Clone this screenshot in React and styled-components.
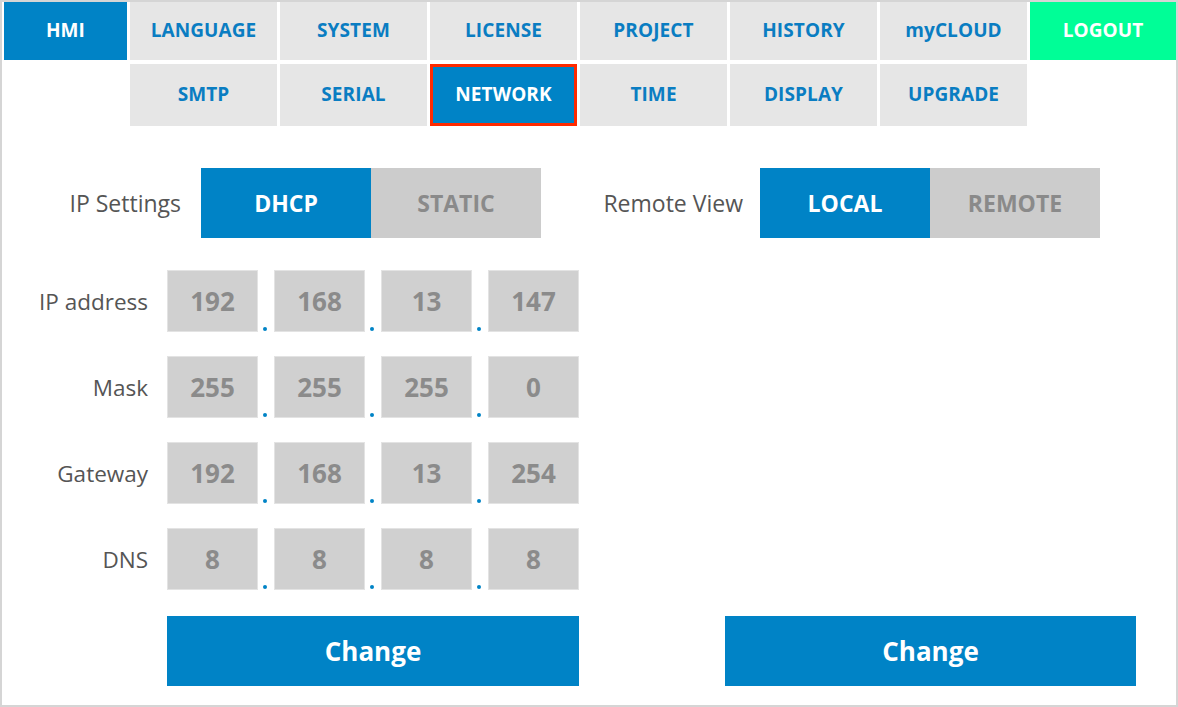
import React from "react";
import styled, { createGlobalStyle } from "styled-components";

const Global = createGlobalStyle`
  html, body { margin: 0; padding: 0; background: #fff; }
  body { font-family: "Open Sans", "Noto Sans", sans-serif; }
  * { box-sizing: border-box; }
`;

const Frame = styled.div`
  width: 1178px;
  height: 707px;
  border: 2px solid #d5d5d5;
  background: #fff;
  display: flex;
  flex-direction: column;
  overflow: hidden;
`;

const Nav = styled.nav`
  display: grid;
  grid-template-columns: 123px repeat(6, 147px) 146px;
  grid-template-rows: 58px 62px;
  column-gap: 3px;
  row-gap: 4px;
  padding-left: 2px;
`;

const NavItem = styled.div`
  grid-column: ${(p) => p.$col || "auto"};
  display: flex;
  align-items: center;
  justify-content: center;
  padding-bottom: 2px;
  background: ${(p) =>
    p.$variant === "active" || p.$variant === "current"
      ? "#0083c6"
      : p.$variant === "logout"
      ? "#00fe97"
      : "#e6e6e6"};
  color: ${(p) => (p.$variant ? "#ffffff" : "#0a7dc2")};
  border: ${(p) => (p.$variant === "current" ? "3px solid #ff2a00" : "none")};
  font-weight: 700;
  font-size: 19px;
  letter-spacing: 0.1px;
`;

const Body = styled.div`
  display: grid;
  grid-template-columns: 595px 1fr;
  grid-template-rows: 70px auto 70px;
  margin-top: 42px;
`;

const SettingRow = styled.div`
  display: flex;
  align-items: center;
  gap: ${(p) => p.$gap}px;
`;

const SettingLabel = styled.div`
  width: ${(p) => p.$w}px;
  text-align: right;
  font-size: 23px;
  color: #555555;
  white-space: nowrap;
`;

const Toggle = styled.div`
  display: flex;
  height: 70px;
`;

const ToggleBtn = styled.div`
  width: 170px;
  height: 70px;
  display: flex;
  align-items: center;
  justify-content: center;
  font-weight: 700;
  font-size: 23px;
  background: ${(p) => (p.$on ? "#0083c6" : "#cccccc")};
  color: ${(p) => (p.$on ? "#ffffff" : "#8a8a8a")};
`;

const Fields = styled.div`
  display: flex;
  flex-direction: column;
  gap: 24px;
  margin-top: 32px;
`;

const FieldRow = styled.div`
  display: flex;
  align-items: center;
`;

const FieldLabel = styled.div`
  width: 146px;
  margin-right: 19px;
  text-align: right;
  font-size: 22.5px;
  color: #555555;
  white-space: nowrap;
`;

const Octet = styled.div`
  width: 91px;
  height: 62px;
  background: #d0d0d0;
  border: 1px solid #e3e3e3;
  display: flex;
  align-items: center;
  justify-content: center;
  font-weight: 700;
  font-size: 26px;
  color: #8b8b8b;
`;

const DotGap = styled.div`
  width: 16px;
  height: 62px;
  display: flex;
  align-items: flex-end;
  justify-content: center;
  padding-bottom: 1px;
  padding-right: 2px;
`;

const Dot = styled.span`
  width: 4px;
  height: 4px;
  border-radius: 50%;
  background: #0083c6;
`;

const ChangeRow = styled.div`
  display: flex;
  align-items: flex-start;
  padding-left: ${(p) => p.$pad}px;
  margin-top: 26px;
`;

const ChangeBtn = styled.button`
  width: ${(p) => p.$w}px;
  height: 70px;
  border: none;
  background: #0083c6;
  color: #ffffff;
  font-family: "Open Sans", "Noto Sans", sans-serif;
  font-weight: 700;
  font-size: 26px;
  padding: 0;
`;

const topRow = ["LANGUAGE", "SYSTEM", "LICENSE", "PROJECT", "HISTORY", "myCLOUD"];
const bottomRow = ["SMTP", "SERIAL", "NETWORK", "TIME", "DISPLAY", "UPGRADE"];

const fields = [
  ["IP address", ["192", "168", "13", "147"]],
  ["Mask", ["255", "255", "255", "0"]],
  ["Gateway", ["192", "168", "13", "254"]],
  ["DNS", ["8", "8", "8", "8"]],
];

export default function App() {
  return (
    <>
      <Global />
      <Frame>
        <Nav>
          <NavItem $variant="active">HMI</NavItem>
          {topRow.map((t) => (
            <NavItem key={t}>{t}</NavItem>
          ))}
          <NavItem $variant="logout">LOGOUT</NavItem>
          {bottomRow.map((t, i) => (
            <NavItem
              key={t}
              $col={i === 0 ? "2" : undefined}
              $variant={t === "NETWORK" ? "current" : undefined}
            >
              {t}
            </NavItem>
          ))}
        </Nav>
        <Body>
          <SettingRow $gap={20}>
            <SettingLabel $w={179}>IP Settings</SettingLabel>
            <Toggle>
              <ToggleBtn $on>DHCP</ToggleBtn>
              <ToggleBtn>STATIC</ToggleBtn>
            </Toggle>
          </SettingRow>
          <SettingRow $gap={17}>
            <SettingLabel $w={146}>Remote View</SettingLabel>
            <Toggle>
              <ToggleBtn $on>LOCAL</ToggleBtn>
              <ToggleBtn>REMOTE</ToggleBtn>
            </Toggle>
          </SettingRow>
          <Fields>
            {fields.map(([label, vals]) => (
              <FieldRow key={label}>
                <FieldLabel>{label}</FieldLabel>
                {vals.map((v, i) => (
                  <React.Fragment key={i}>
                    <Octet>{v}</Octet>
                    {i < 3 && (
                      <DotGap>
                        <Dot />
                      </DotGap>
                    )}
                  </React.Fragment>
                ))}
              </FieldRow>
            ))}
          </Fields>
          <div />
          <ChangeRow $pad={165}>
            <ChangeBtn $w={412}>Change</ChangeBtn>
          </ChangeRow>
          <ChangeRow $pad={128}>
            <ChangeBtn $w={411}>Change</ChangeBtn>
          </ChangeRow>
        </Body>
      </Frame>
    </>
  );
}
